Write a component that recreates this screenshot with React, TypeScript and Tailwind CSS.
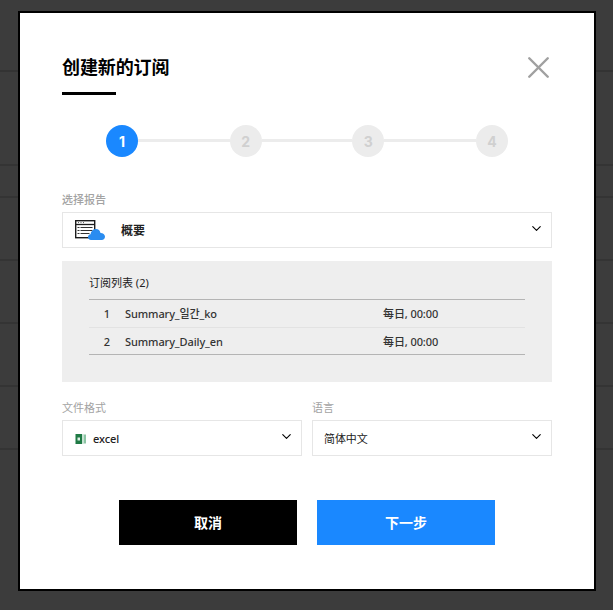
import React from 'react';
import { ChevronDown, X } from 'lucide-react';

const font = { fontFamily: '"Noto Sans", "Noto Sans CJK SC", "Noto Sans CJK KR", sans-serif' };

const ReportIcon = () => (
  <svg width="32" height="24" viewBox="0 0 32 24" className="shrink-0">
    <rect x="0.700" y="2.700" width="19" height="17" fill="#fff" stroke="#1c1c1c" strokeWidth="1.400" />
    <path d="M1 6.500h18.500" stroke="#1c1c1c" strokeWidth="1.300" />
    <path d="M3 4.600h1M5.500 4.600h1M8 4.600h1" stroke="#555" strokeWidth="1" />
    <path d="M2.500 9.500h2M5.500 9.500h12M2.500 12.500h2M5.500 12.500h12M2.500 15.500h2M5.500 15.500h9" stroke="#333" strokeWidth="1" />
    <path d="M16 22c-1.900 0-3-1.300-3-2.900 0-1.500 1.100-2.600 2.500-2.800.7-3.300 2.500-5.300 5.300-5.300 2.600 0 4.200 1.600 4.700 3.900 2.300-.1 4.500 1.400 4.500 3.700 0 2-1.400 3.400-3.300 3.400z" fill="#2a8cf0" />
  </svg>
);

const ExcelIcon = () => (
  <svg width="12" height="12" viewBox="0 0 12 12" className="shrink-0">
    <rect x="5" y="1.500" width="6" height="9" fill="#8cc4a4" />
    <rect x="7.500" y="1.500" width="1" height="9" fill="#fff" />
    <rect x="0.500" y="1" width="6.500" height="10" fill="#1f7a45" />
    <rect x="2.500" y="4.500" width="2.500" height="3" fill="#dff0e6" />
  </svg>
);

const Step = ({ n, active }: { n: number; active?: boolean }) => (
  <div
    className={`relative z-10 flex h-8 w-8 shrink-0 items-center justify-center rounded-full text-[14px] font-bold ${
      active ? 'bg-[#1a88ff] text-white' : 'bg-[#ececec] text-[#d0d0d0]'
    }`}
    style={{ fontFamily: 'Inter, sans-serif' }}
  >
    {n}
  </div>
);

const Select = ({ children, className }: { children: React.ReactNode; className?: string }) => (
  <div className={`flex h-9 items-center justify-between border border-[#e6e6e6] bg-white pt-[2px] ${className ?? ''}`}>
    {children}
  </div>
);

const Chevron = () => <ChevronDown className="mt-[-5px] h-[15px] w-[15px] text-black" strokeWidth={1.800} />;

const subscriptions = [
  { id: 1, name: 'Summary_일간_ko', time: '每日, 00:00' },
  { id: 2, name: 'Summary_Daily_en', time: '每日, 00:00' },
];

export default function App() {
  return (
    <div className="relative h-[610px] w-[613px] overflow-hidden bg-[#3c3c3c]" style={font}>
      {/* dimmed page rows behind the dialog */}
      <div className="flex flex-col">
        <div className="h-[72px] border-b-2 border-[#333]" />
        <div className="h-[94px] border-b-2 border-[#343434]" />
        <div className="h-[32px] border-b-2 border-[#343434]" />
        <div className="h-[63px] border-b-2 border-[#343434]" />
        <div className="h-[63px] border-b-2 border-[#343434]" />
        <div className="h-[63px] border-b-2 border-[#343434]" />
        <div className="h-[63px] border-b-2 border-[#343434]" />
      </div>

      {/* dialog */}
      <div className="absolute left-[18px] top-[11px] flex h-[580px] w-[578px] flex-col border-2 border-black bg-white px-[42px]">
        <div className="relative pt-[40px]">
          <h1 className="text-[18px] font-bold leading-[28px] tracking-[-0.1px] text-black">创建新的订阅</h1>
          <div className="mt-[11px] h-[3px] w-[54px] bg-black" />
          <X className="absolute right-[-5px] top-[36px] h-[37px] w-[37px] text-[#a0a0a0]" strokeWidth={1.600} />
        </div>

        <div className="mt-[30px] flex items-center px-[44px]">
          <Step n={1} active />
          <div className="mb-[2px] h-[3px] w-[92px] bg-[#ececec]" />
          <Step n={2} />
          <div className="mb-[2px] h-[3px] w-[91px] bg-[#ececec]" />
          <Step n={3} />
          <div className="mb-[2px] h-[3px] w-[92px] bg-[#ececec]" />
          <Step n={4} />
        </div>

        <label className="mt-[35px] text-[11px] font-medium leading-[16px] text-[#a3a3a3]">选择报告</label>
        <Select className="mt-[4px] pl-[12px] pr-[7px]">
          <div className="mt-[-2px] flex items-center">
            <ReportIcon />
            <span className="ml-[14px] mt-[2px] text-[12px] font-bold text-[#222]">概要</span>
          </div>
          <Chevron />
        </Select>

        <div className="mt-[13px] h-[121px] bg-[#eeeeee] px-[27px] pt-[14px]">
          <div className="h-[24px] text-[11px] leading-[16px] text-[#222]">订阅列表 (2)</div>
          <div className="border-y border-[#b4b4b4]">
            {subscriptions.map((s, i) => (
              <div
                key={s.id}
                className={`flex items-center text-[11px] font-medium tracking-[-0.1px] text-[#333] ${
                  i === 0 ? 'h-[28px] border-b border-[#e2e2e2] pt-[1px]' : 'h-[26px] pt-[2px]'
                }`}
              >
                <span className="w-[36px] pr-[15px] text-right">{s.id}</span>
                <span className="w-[258px]">{s.name}</span>
                <span>{s.time}</span>
              </div>
            ))}
          </div>
        </div>

        <div className="mt-[18px] grid grid-cols-2 gap-[10px]">
          <div className="flex flex-col">
            <label className="text-[11px] leading-[16px] text-[#a3a3a3]">文件格式</label>
            <Select className="mt-[4px] pl-[12px] pr-[7px]">
              <div className="flex items-center gap-[6px]">
                <ExcelIcon />
                <span className="text-[11px] font-medium tracking-[-0.1px] text-[#222]">excel</span>
              </div>
              <Chevron />
            </Select>
          </div>
          <div className="flex flex-col">
            <label className="text-[11px] leading-[16px] text-[#a3a3a3]">语言</label>
            <Select className="mt-[4px] pl-[11px] pr-[7px]">
              <span className="text-[11px] tracking-[-0.1px] text-[#222]">简体中文</span>
              <Chevron />
            </Select>
          </div>
        </div>

        <div className="mt-[44px] flex justify-center gap-[20px]">
          <button className="h-[45px] w-[178px] bg-black text-[14px] font-bold text-white">取消</button>
          <button className="h-[45px] w-[178px] bg-[#1a88ff] text-[14px] font-bold text-white">下一步</button>
        </div>
      </div>
    </div>
  );
}
